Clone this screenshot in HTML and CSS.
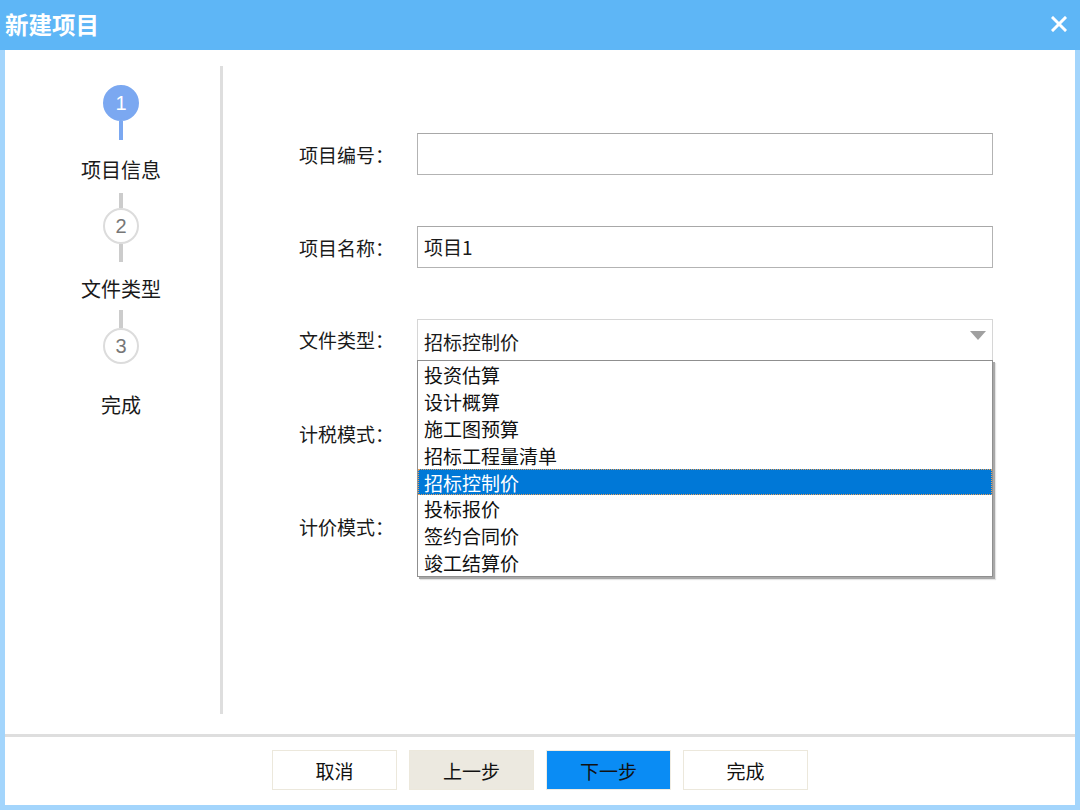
FILE: index.html
```html
<!DOCTYPE html>
<html lang="zh-CN">
<head>
<meta charset="utf-8">
<title>新建项目</title>
<link rel="stylesheet" href="styles.css">
</head>
<body>
<div class="window">
  <div class="titlebar">
    <span class="title">新建项目</span>
    <svg class="close" width="16" height="16" viewBox="0 0 16 16"><path d="M2 2 L14 14 M14 2 L2 14" stroke="#fff" stroke-width="3" stroke-linecap="square"/></svg>
  </div>
  <div class="body">
    <div class="main">
      <div class="sidebar">
        <div class="steps">
          <div class="circle active">1</div>
          <div class="line blue l1"></div>
          <div class="label lab1">项目信息</div>
          <div class="line l2"></div>
          <div class="circle">2</div>
          <div class="line l3"></div>
          <div class="label lab2">文件类型</div>
          <div class="line l4"></div>
          <div class="circle">3</div>
          <div class="label lab3">完成</div>
        </div>
      </div>
      <div class="divider"></div>
      <div class="form">
        <div class="row">
          <div class="flabel">项目编号：</div>
          <div class="input"></div>
        </div>
        <div class="row">
          <div class="flabel">项目名称：</div>
          <div class="input">项目1</div>
        </div>
        <div class="row row-select">
          <div class="flabel">文件类型：</div>
          <div class="select-wrap">
            <div class="select">
              <span>招标控制价</span>
              <span class="arrow"></span>
            </div>
            <ul class="dropdown">
              <li>投资估算</li>
              <li>设计概算</li>
              <li>施工图预算</li>
              <li>招标工程量清单</li>
              <li class="selected">招标控制价</li>
              <li>投标报价</li>
              <li>签约合同价</li>
              <li>竣工结算价</li>
            </ul>
          </div>
        </div>
        <div class="row">
          <div class="flabel">计税模式：</div>
        </div>
        <div class="row">
          <div class="flabel">计价模式：</div>
        </div>
      </div>
    </div>
    <div class="separator"></div>
    <div class="footer">
      <button class="btn">取消</button>
      <button class="btn prev">上一步</button>
      <button class="btn next">下一步</button>
      <button class="btn">完成</button>
    </div>
  </div>
</div>
</body>
</html>
```
FILE: styles.css
```css
* { box-sizing: border-box; }
html, body {
  margin: 0;
  padding: 0;
  width: 1080px;
  height: 810px;
  overflow: hidden;
  font-family: "Noto Sans CJK SC", "Liberation Sans", sans-serif;
  color: #1a1a1a;
}
.window {
  width: 1080px;
  height: 810px;
  background: #a3d5fc;
  display: flex;
  flex-direction: column;
}
.titlebar {
  height: 50px;
  background: #5eb6f6;
  display: flex;
  align-items: center;
  justify-content: space-between;
  padding: 0 13px 0 5px;
}
.title {
  color: #fff;
  font-size: 23.5px;
  font-weight: bold;
  line-height: 50px;
  margin-top: -2px;
}
.close { display: block; margin-top: -2px; }
.body {
  flex: 1;
  margin: 0 5px 5px 5px;
  background: #fff;
  display: flex;
  flex-direction: column;
}
.main {
  height: 684px;
  display: flex;
}
.sidebar {
  width: 215px;
  padding-left: 17px;
}
.steps {
  width: 198px;
  display: flex;
  flex-direction: column;
  align-items: center;
  padding-top: 35px;
}
.circle {
  width: 36px;
  height: 36px;
  border-radius: 50%;
  border: 2px solid #dcdcdc;
  background: #fff;
  color: #777;
  font-family: "Liberation Sans", Arial, sans-serif;
  font-size: 20px;
  line-height: 32px;
  text-align: center;
}
.circle.active {
  background: #7ba8f1;
  border-color: #7ba8f1;
  color: #fff;
}
.line {
  width: 4px;
  background: #cccccc;
}
.line.blue { background: #7ba8f1; }
.l1 { height: 19px; }
.l2 { height: 15px; }
.l3 { height: 18px; }
.l4 { height: 18px; }
.label {
  font-size: 20px;
  line-height: 20px;
  color: #1a1a1a;
}
.lab1 { padding: 20px 0 13px; }
.lab2 { padding: 17px 0 11px; }
.lab3 { padding-top: 31px; }
.divider {
  width: 3px;
  margin: 16px 0 20px;
  background: #dedede;
}
.form {
  flex: 1;
  padding: 83px 82px 0 76px;
  display: flex;
  flex-direction: column;
  gap: 51px;
}
.row {
  height: 42px;
  display: flex;
  align-items: center;
}
.row-select { height: 41px; margin-top: 0; margin-bottom: 1px; }
.flabel {
  width: 118px;
  font-size: 19px;
  color: #1a1a1a;
}
.input {
  flex: 1;
  height: 42px;
  border: 1px solid #b3b3b3;
  border-top-color: #a8a8a8;
  padding-left: 6px;
  font-size: 19px;
  line-height: 40px;
}
.select-wrap {
  flex: 1;
  position: relative;
  height: 41px;
}
.select {
  height: 41px;
  border: 1px solid #d6d6d6;
  border-bottom: none;
  padding-left: 6px;
  font-size: 19px;
  line-height: 44px;
  display: flex;
  justify-content: space-between;
  align-items: center;
}
.select span:first-child { margin-top: 3px; }
.arrow {
  width: 0;
  height: 0;
  border-left: 8px solid transparent;
  border-right: 8px solid transparent;
  border-top: 9px solid #a0a0a0;
  margin-right: 6px;
  margin-top: -10px;
}
.dropdown {
  position: absolute;
  left: 0;
  top: 41px;
  width: 576px;
  margin: 0;
  padding: 0;
  list-style: none;
  background: #fff;
  border: 1px solid #8f8f8f;
  box-shadow: 2px 2px 0 #a8a8a8, 3px 3px 1px #e4e4e4;
  z-index: 2;
}
.dropdown li {
  height: 26.9px;
  line-height: 28px;
  font-size: 19px;
  padding-left: 6px;
  color: #111;
}
.dropdown li.selected {
  background: #0078d7;
  color: #fff;
  outline: 1px dotted #e7a05a;
  outline-offset: -1px;
}
.separator {
  height: 3px;
  background: #dedede;
}
.footer {
  flex: 1;
  display: flex;
  justify-content: center;
  gap: 12px;
  padding-top: 13px;
}
.btn {
  width: 125px;
  height: 40px;
  border: 1px solid #ece8dc;
  background: #fff;
  font-family: "Noto Sans CJK SC", "Liberation Sans", sans-serif;
  font-size: 19px;
  color: #111;
  padding: 0;
}
.btn.prev { background: #ece9e0; }
.btn.next { background: #0a8cf4; border-color: #f0ece2; }
```
